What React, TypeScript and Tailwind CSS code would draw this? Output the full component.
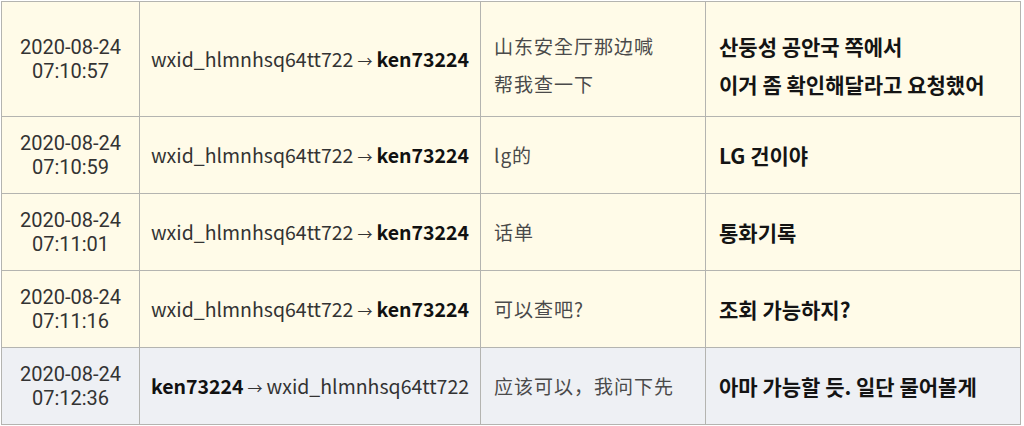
import React from 'react'

type Row = {
    date: string;
    time: string;
    from: string;
    to: string;
    boldFrom: boolean;
    zh: string[];
    ko: string[];
    tall?: boolean;
    gray?: boolean;
}

const rows: Row[] = [
    { date: '2020-08-24', time: '07:10:57', from: 'wxid_hlmnhsq64tt722', to: 'ken73224', boldFrom: false, zh: ['山东安全厅那边喊', '帮我查一下'], ko: ['산둥성 공안국 쪽에서', '이거 좀 확인해달라고 요청했어'], tall: true },
    { date: '2020-08-24', time: '07:10:59', from: 'wxid_hlmnhsq64tt722', to: 'ken73224', boldFrom: false, zh: ['lg的'], ko: ['LG 건이야'] },
    { date: '2020-08-24', time: '07:11:01', from: 'wxid_hlmnhsq64tt722', to: 'ken73224', boldFrom: false, zh: ['话单'], ko: ['통화기록'] },
    { date: '2020-08-24', time: '07:11:16', from: 'wxid_hlmnhsq64tt722', to: 'ken73224', boldFrom: false, zh: ['可以查吧?'], ko: ['조회 가능하지?'] },
    { date: '2020-08-24', time: '07:12:36', from: 'ken73224', to: 'wxid_hlmnhsq64tt722', boldFrom: true, zh: ['应该可以，我问下先'], ko: ['아마 가능할 듯. 일단 물어볼게'], gray: true },
]

const App = () => {
  return (
        <div className="w-[1024px] h-[426px] bg-white pt-px pl-px" style={{ fontFamily: '"Noto Sans CJK KR", "Noto Sans", sans-serif' }}>
            <table className="border-collapse table-fixed w-[1019px]">
                <colgroup>
                    <col className="w-[138px]" />
                    <col className="w-[341px]" />
                    <col className="w-[225px]" />
                    <col className="w-[315px]" />
                </colgroup>
                <tbody>
                {rows.map((r, i) => (
                    <tr key={i} className={`${r.tall ? 'h-[115px]' : 'h-[77px]'} ${r.gray ? 'bg-[#eef0f4]' : 'bg-[#fffbe8]'}`}>
                        {/* 날짜 */}
                        <td className="border border-[#b4b4b0] text-center font-[Roboto,sans-serif] text-[20px] leading-[24px] text-[#333] align-middle">
                            <div>{r.date}</div>
                            <div>{r.time}</div>
                        </td>
                        <td className="border border-[#b4b4b0] text-center text-[19.5px] text-[#333] whitespace-nowrap">
                            {r.boldFrom ? (
                                <>
                                <span className="font-bold text-[#111]">{r.from}</span>
                                <span className="text-[15px] mx-1">→</span>
                                <span>{r.to}</span>
                                </>
                            ) : (
                                <>
                                <span>{r.from}</span>
                                <span className="text-[15px] mx-1">→</span>
                                <span className="font-bold text-[#111]">{r.to}</span>
                                </>
                            )}
                        </td>
                        <td className={`border border-[#b4b4b0] pl-[13px] text-[19px] leading-[38px] text-[#4a4a4a] tracking-[1px] whitespace-nowrap ${r.tall ? 'pt-[11px]' : ''}`}>
                            {r.zh.map((l, j) => <div key={j}>{l}</div>)}
                        </td>
                        <td className={`border border-[#b4b4b0] pl-[13px] text-[21px] leading-[38px] font-bold text-[#141414] whitespace-nowrap ${r.tall ? 'pt-[11px]' : ''}`}>
                            {r.ko.map((l, j) => <div key={j}>{l}</div>)}
                        </td>
                    </tr>
                ))}
                </tbody>
            </table>
        </div>
  )
}

export default App
